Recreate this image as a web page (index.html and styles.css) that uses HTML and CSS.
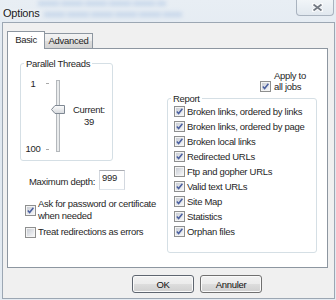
FILE: index.html
```html
<html>
<head>
<meta charset="utf-8" />
<link rel="stylesheet" href="styles.css">
</head>
<body>
<svg class="defs" width="0" height="0">
  <defs>
    <linearGradient id="boxfill" x1="0" y1="0" x2="1" y2="1">
      <stop offset="0" stop-color="#c9cdd4"/>
      <stop offset="1" stop-color="#f5f6f8"/>
    </linearGradient>
    <linearGradient id="thumbfill" x1="0" y1="0" x2="0" y2="1">
      <stop offset="0" stop-color="#fdfdfd"/>
      <stop offset="1" stop-color="#d6d9dd"/>
    </linearGradient>
    <symbol id="box" viewBox="0 0 11 11">
      <rect x=".5" y=".5" width="10" height="10" fill="#f4f4f4" stroke="#8e8f8f"/>
      <rect x="2" y="2" width="7" height="7" fill="url(#boxfill)"/>
    </symbol>
    <symbol id="tick" viewBox="0 0 11 11">
      <path d="M2.8 5.6 L4.6 7.5 L8.4 2.8" fill="none" stroke="#4a5f9f" stroke-width="1.5"/>
    </symbol>
  </defs>
</svg>

<div class="window">
  <div class="titlebar">
    <span class="title">Options</span>
    <div class="ghost"><span class="g1"></span><span class="g2"></span></div>
    <span class="close">
      <svg width="11" height="9" viewBox="0 0 11 9">
        <path d="M1.5 1.5 L9.5 7.5 M9.5 1.5 L1.5 7.5" stroke="#fbfcfd" stroke-width="3.6" stroke-linecap="round"/>
        <path d="M1.5 1.5 L9.5 7.5 M9.5 1.5 L1.5 7.5" stroke="#737a84" stroke-width="1.8"/>
      </svg>
    </span>
  </div>

  <div class="client">
    <div class="tabs">
      <div class="tab active">Basic</div>
      <div class="tab">Advanced</div>
    </div>

    <div class="page">
      <div class="left">
        <fieldset class="group threads">
          <legend>Parallel Threads</legend>
          <div class="slider">
            <div class="scale"><span>1</span><span>100</span></div>
            <svg width="27" height="76" viewBox="0 0 27 76">
              <path d="M4 5.5 H7 M4 71.5 H7" stroke="#a9a9a9"/>
              <rect x="14.5" y="2.5" width="3" height="71" fill="#e9ebec" stroke="#b4b8bc"/>
              <path d="M9.5 31.5 L13 27.5 H22.5 V35.5 H13 Z" fill="url(#thumbfill)" stroke="#7f8893" stroke-linejoin="round"/>
            </svg>
            <div class="current">Current:<br>39</div>
          </div>
        </fieldset>

        <div class="depth">
          <span class="depth-label">Maximum depth:</span>
          <span class="input">999</span>
        </div>

        <label class="check ask">
          <svg class="cb" width="11" height="11"><use href="#box"/><use href="#tick"/></svg>
          <span class="ask-text">Ask for password or certificate when needed</span>
        </label>
        <label class="check treat">
          <svg class="cb" width="11" height="11"><use href="#box"/></svg>
          <span>Treat redirections as errors</span>
        </label>
      </div>

      <div class="right">
        <label class="check apply">
          <svg class="cb" width="11" height="11"><use href="#box"/><use href="#tick"/></svg>
          <span class="apply-text">Apply to all jobs</span>
        </label>

        <fieldset class="group report">
          <legend>Report</legend>
          <label class="check item"><svg class="cb" width="11" height="11"><use href="#box"/><use href="#tick"/></svg><span>Broken links, ordered by links</span></label>
          <label class="check item"><svg class="cb" width="11" height="11"><use href="#box"/><use href="#tick"/></svg><span>Broken links, ordered by page</span></label>
          <label class="check item"><svg class="cb" width="11" height="11"><use href="#box"/><use href="#tick"/></svg><span>Broken local links</span></label>
          <label class="check item"><svg class="cb" width="11" height="11"><use href="#box"/><use href="#tick"/></svg><span>Redirected URLs</span></label>
          <label class="check item"><svg class="cb" width="11" height="11"><use href="#box"/></svg><span>Ftp and gopher URLs</span></label>
          <label class="check item"><svg class="cb" width="11" height="11"><use href="#box"/><use href="#tick"/></svg><span>Valid text URLs</span></label>
          <label class="check item"><svg class="cb" width="11" height="11"><use href="#box"/><use href="#tick"/></svg><span>Site Map</span></label>
          <label class="check item"><svg class="cb" width="11" height="11"><use href="#box"/><use href="#tick"/></svg><span>Statistics</span></label>
          <label class="check item"><svg class="cb" width="11" height="11"><use href="#box"/><use href="#tick"/></svg><span>Orphan files</span></label>
        </fieldset>
      </div>
    </div>

    <div class="buttons">
      <button class="default">OK</button>
      <button>Annuler</button>
    </div>
  </div>
</div>
</body>
</html>
```

FILE: styles.css
```css
* { box-sizing: border-box; }
body { margin: 0; font: 9.5px/11px "Liberation Sans", Arial, sans-serif; letter-spacing: -0.3px; color: #1f1f1f; }
.defs { display: block; }

.window { width: 336px; height: 300px; padding: 0 1px 1px 2px; display: flex; flex-direction: column;
          background: linear-gradient(#e8eef4, #dfe7ef 30%, #e4ebf2); }

/* title bar */
.titlebar { height: 22px; display: flex; align-items: flex-start; }
.title { font-size: 11px; line-height: 13px; padding: 7px 0 0 1px; letter-spacing: -0.2px; color: #1b1b1b; text-shadow: 0 0 5px #fff; }
.ghost { display: flex; flex-direction: column; gap: 6px; padding-top: 1px; margin-left: -4px; opacity: .35; filter: blur(2px); }
.ghost span { height: 5px; background: repeating-linear-gradient(90deg, #8fb0db 0 20px, #b7cbe6 20px 24px); }
.g1 { width: 128px; margin-left: 2px; }
.g2 { width: 138px; margin-left: 8px; }
.close { margin-left: auto; margin-right: 1px; width: 38px; height: 16px; padding-left: 4px;
         display: flex; justify-content: center; align-items: center;
         border: 1px solid #a9b3bf; border-top: 0; border-radius: 0 0 4px 4px;
         background: linear-gradient(#f1f5f8, #e1e8ef); }

/* client area */
.client { flex: 1; border: 1px solid #9ca7b3; background: #f0f0f0; padding-top: 8px; }

.tabs { display: flex; align-items: flex-end; height: 17px; margin-left: 4px; }
.tab { height: 15px; border: 1px solid #8d96a0; border-bottom: 0; text-align: center; line-height: 14px;
       background: linear-gradient(#f3f3f3, #ebebeb 50%, #dedede 50%, #d3d3d3); }
.tab + .tab { margin-left: -1px; width: 49px; }
.tab.active { position: relative; z-index: 1; width: 38px; height: 18px; margin-bottom: -1px; line-height: 15px; background: #fff; }

.page { margin-left: 4px; width: 321px; height: 220px; border: 1px solid #8d96a0; background: #fff;
        display: flex; padding: 9px 0 0 12px; }
.left { width: 147px; display: flex; flex-direction: column; }
.right { width: 150px; display: flex; flex-direction: column; }

/* group boxes */
.group { margin: 0; padding: 0 3px; min-width: 0; border: 1px solid #d5dfe5; border-radius: 3px; }
.group legend { padding: 0 2px; line-height: 11px; }
.threads { width: 93px; height: 103px; }

.slider { display: flex; height: 76px; margin-top: 9px; }
.scale { width: 18px; display: flex; flex-direction: column; justify-content: space-between; align-items: center; }
.current { margin-left: 4px; align-self: center; text-align: center; line-height: 12px; }

.depth { display: flex; align-items: center; gap: 4px; margin-top: 9px; padding-left: 9px; }
.depth-label { margin-top: 3px; }
.input { width: 26px; height: 20px; padding: 0 2px; line-height: 14px; background: #fff;
         border: 1px solid; border-color: #abadb3 #d3d8df #dfe5eb #d3d8df; }

/* check boxes */
.check { display: flex; align-items: center; gap: 2px; }
.cb { flex: none; display: block; }
.ask { margin-top: 8px; padding-left: 5px; line-height: 12px; }
.ask-text { width: 125px; }
.treat { margin-top: 4px; padding-left: 5px; line-height: 12px; }

.apply { margin: 12px 0 0 93px; align-items: flex-end; gap: 3px; }
.apply-text { width: 40px; }

.report { margin-top: 1px; width: 150px; height: 160px; }
.item { height: 15px; padding-left: 3px; }

/* buttons */
.buttons { display: flex; gap: 6px; margin: 7px 0 0 129px; }
button { width: 62px; height: 18px; padding: 0; font: inherit; letter-spacing: inherit; color: #111;
         border: 1px solid #707070; border-radius: 3px; box-shadow: inset 0 0 0 1px #fafafa;
         background: linear-gradient(#f2f2f2, #ebebeb 50%, #dddddd 51%, #cfcfcf); }
button.default { border-color: #5f6670; }
```
